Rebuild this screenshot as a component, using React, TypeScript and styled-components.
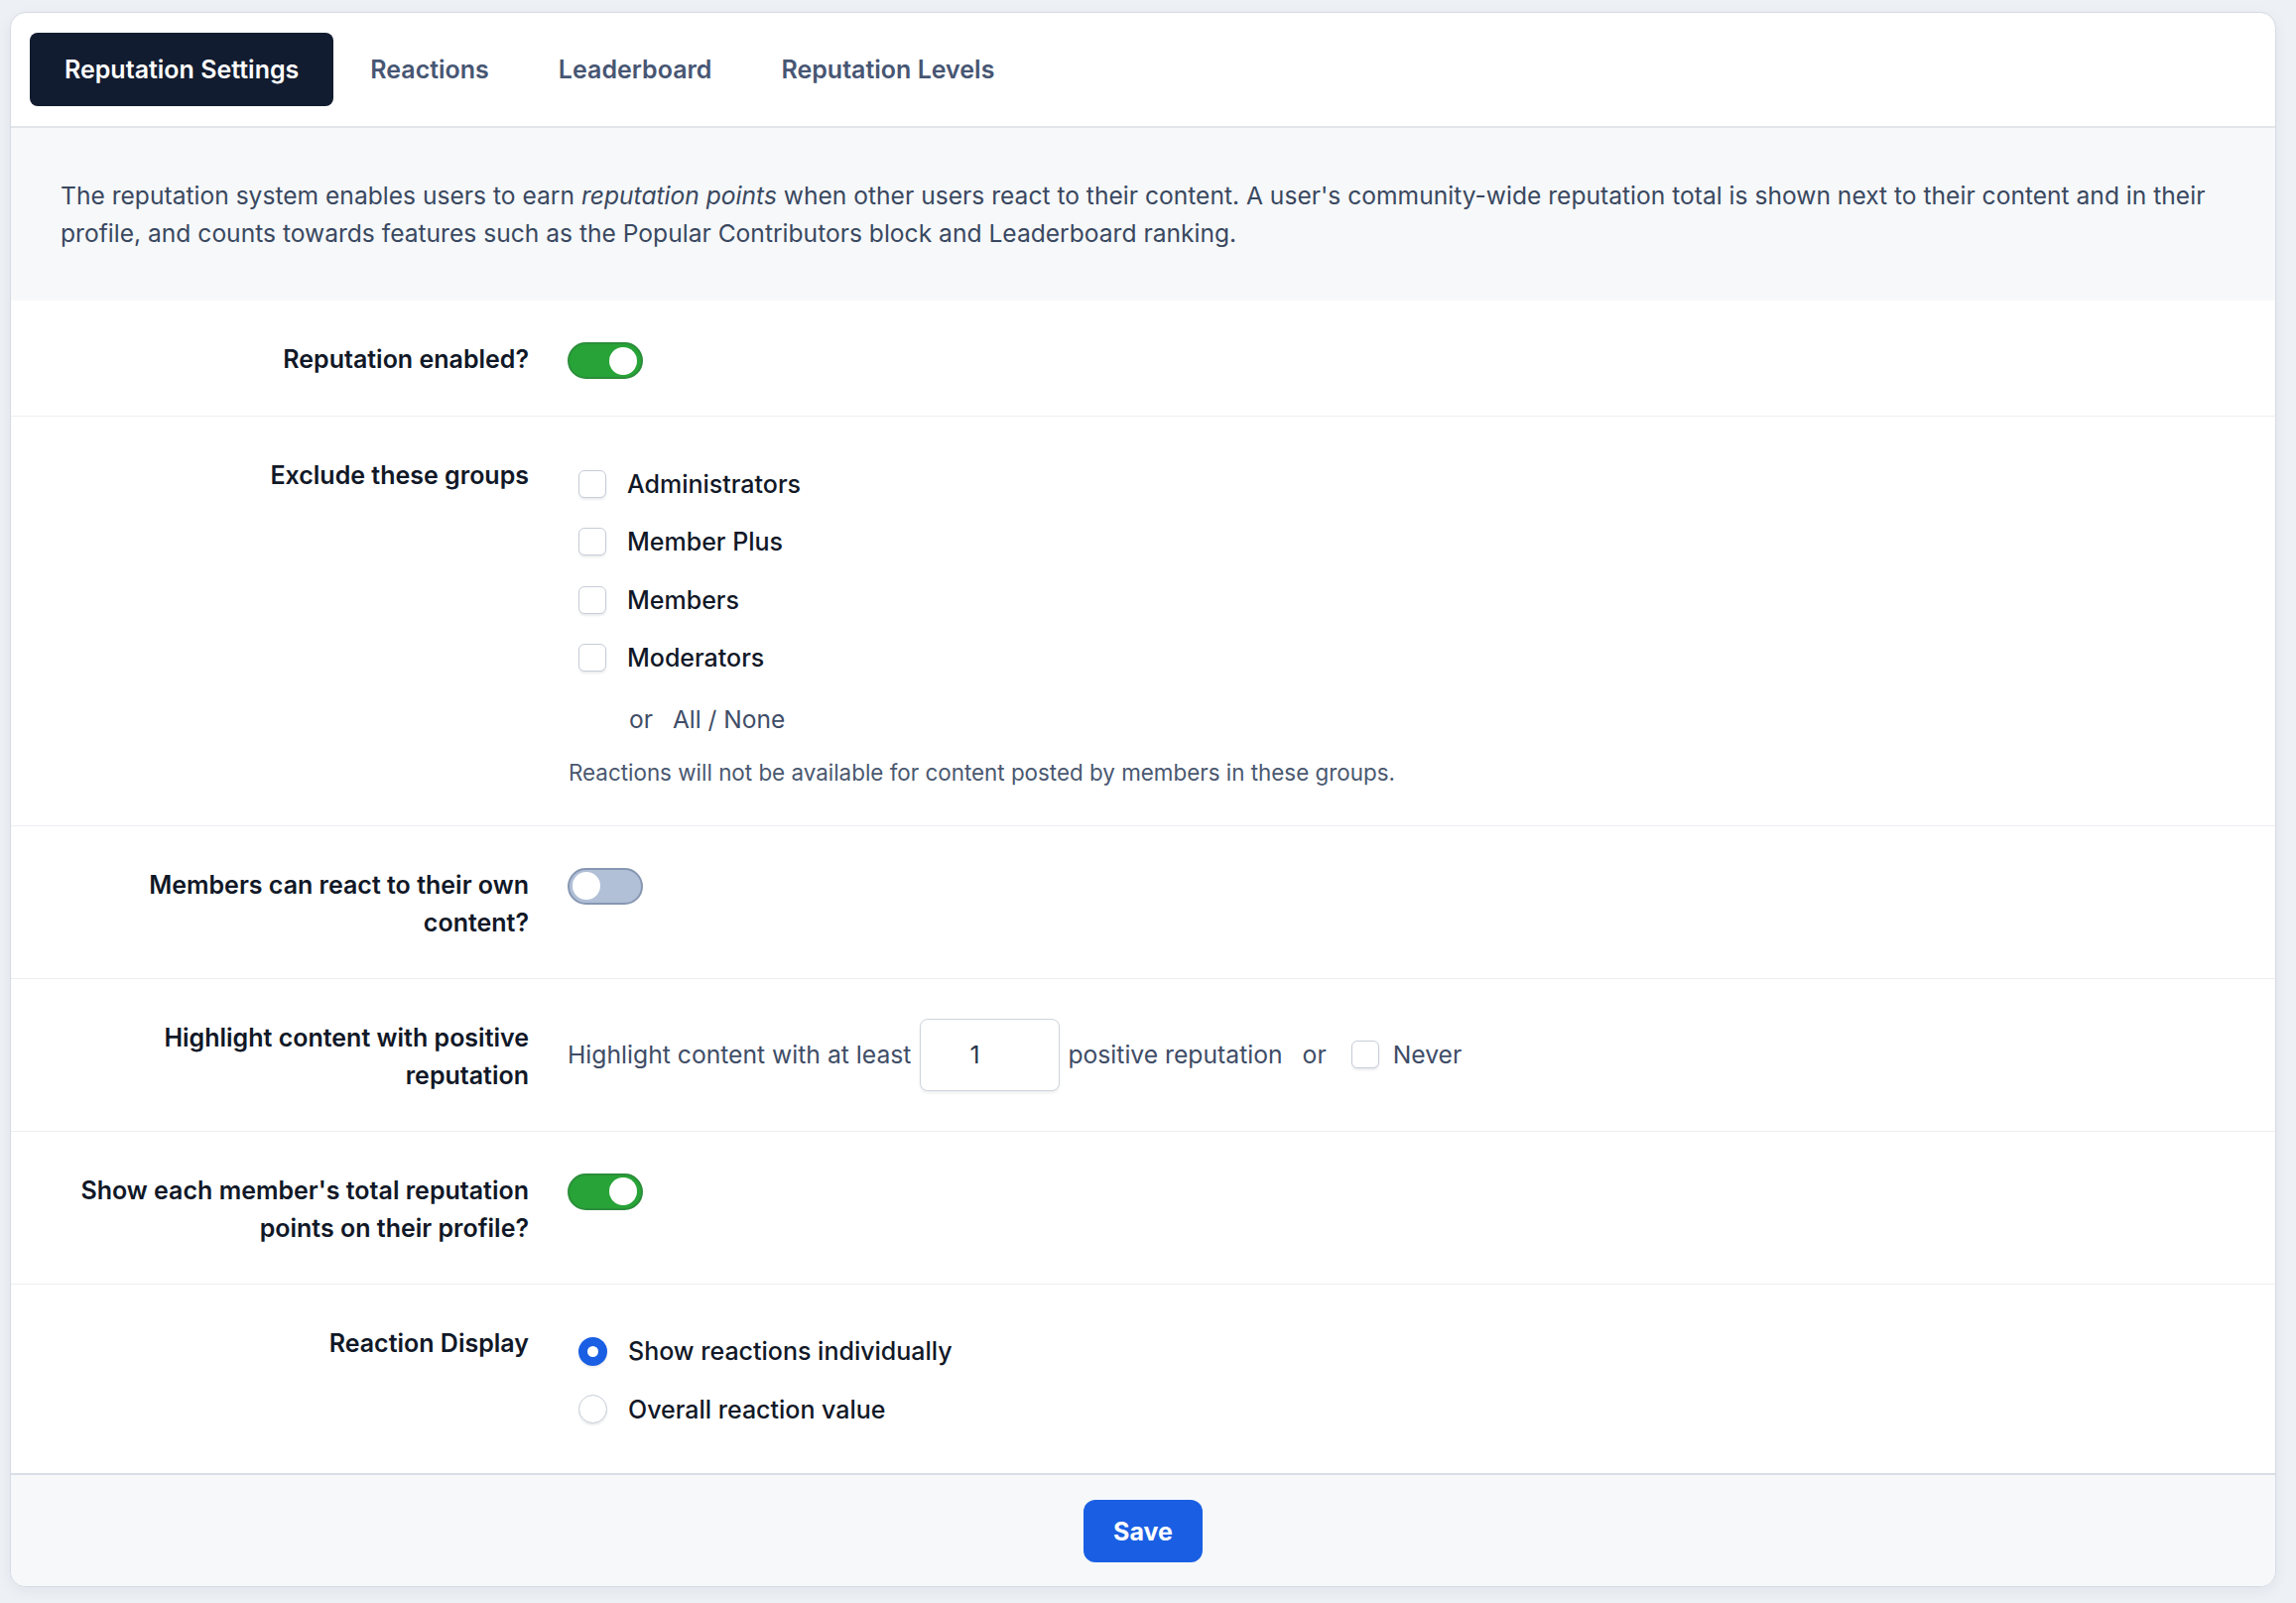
import React from "react";
import styled, { createGlobalStyle } from "styled-components";

const GlobalStyle = createGlobalStyle`
  html, body { margin: 0; padding: 0; }
  body {
    background: #edf0f5;
    font-family: Inter, "Noto Sans", "Liberation Sans", sans-serif;
    -webkit-font-smoothing: antialiased;
  }
  * { box-sizing: border-box; }
`;

const Page = styled.div`
  padding: 12px 20px 16px 10px;
`;

const Card = styled.div`
  background: #ffffff;
  border: 1px solid #d6dbe4;
  border-radius: 16px;
  overflow: hidden;
  box-shadow: 0 4px 14px rgba(30, 41, 59, 0.06);
`;

const TabBar = styled.nav`
  display: flex;
  align-items: center;
  gap: 4px;
  padding: 20px 20px 20px 19px;
  border-bottom: 2px solid #e2e5ea;
`;

const Tab = styled.button<{ $active?: boolean }>`
  height: 74px;
  padding: 0 ${(p) => (p.$active ? "35px" : "33px")};
  border: none;
  border-radius: 8px;
  font-family: inherit;
  font-size: 25px;
  font-weight: 600;
  cursor: pointer;
  background: ${(p) => (p.$active ? "#121c30" : "transparent")};
  color: ${(p) => (p.$active ? "#ffffff" : "#475673")};
`;

const Intro = styled.div`
  background: #f6f8fa;
  padding: 49px 50px 49px 50px;
  font-size: 24.6px;
  line-height: 38px;
  color: #3a4860;
  em { font-style: italic; }
`;

const Row = styled.div<{ $last?: boolean }>`
  display: grid;
  grid-template-columns: 522px 1fr;
  column-gap: 39px;
  padding: 40px 40px ${(p) => (p.$last ? "35px" : "37px")} 0;
  border-bottom: ${(p) => (p.$last ? "none" : "1px solid #eceef2")};
`;

const Label = styled.div`
  padding-left: 52px;
  text-align: right;
  font-size: 25px;
  font-weight: 600;
  line-height: 38px;
  color: #111827;
`;

const Control = styled.div`
  display: flex;
  flex-direction: column;
  align-items: flex-start;
`;

const Toggle = styled.span<{ $on?: boolean }>`
  position: relative;
  display: inline-block;
  width: 76px;
  height: 37px;
  margin-top: 2px;
  border-radius: 19px;
  background: ${(p) => (p.$on ? "#27a337" : "#b1bfd7")};
  border: 2px solid ${(p) => (p.$on ? "#2b8e3a" : "#8797b2")};
  &::after {
    content: "";
    position: absolute;
    top: 2.5px;
    left: ${(p) => (p.$on ? "40px" : "3px")};
    width: 28px;
    height: 28px;
    border-radius: 50%;
    background: #ffffff;
  }
`;

const OptionList = styled.div`
  display: flex;
  flex-direction: column;
  margin-top: -1.5px;
`;

const Option = styled.label`
  display: flex;
  align-items: center;
  gap: 21px;
  height: 58.5px;
  padding-left: 11px;
  font-size: 25px;
  font-weight: 500;
  color: #111827;
`;

const Box = styled.span`
  display: inline-block;
  width: 28px;
  height: 28px;
  flex: none;
  border: 1.5px solid #c6ccd7;
  border-radius: 6px;
  background: #ffffff;
  box-shadow: 0 2px 2px rgba(15, 23, 42, 0.08);
`;

const Radio = styled.span<{ $checked?: boolean }>`
  position: relative;
  display: inline-block;
  width: 29px;
  height: 29px;
  flex: none;
  border-radius: 50%;
  background: ${(p) => (p.$checked ? "#1a5fe3" : "#ffffff")};
  border: ${(p) => (p.$checked ? "none" : "1.5px solid #c6ccd7")};
  box-shadow: 0 2px 2px rgba(15, 23, 42, 0.08);
  &::after {
    content: "";
    display: ${(p) => (p.$checked ? "block" : "none")};
    position: absolute;
    top: 50%;
    left: 50%;
    width: 11px;
    height: 11px;
    margin: -5.5px 0 0 -5.5px;
    border-radius: 50%;
    background: #ffffff;
  }
`;

const AllNone = styled.div`
  display: flex;
  gap: 20px;
  margin: 13px 0 0 62px;
  font-size: 24.5px;
  line-height: 38px;
  color: #3f4d67;
`;

const Help = styled.p`
  margin: 19px 0 0 1px;
  font-size: 22.4px;
  line-height: 32px;
  color: #4a5870;
`;

const Inline = styled.div`
  display: flex;
  align-items: center;
  font-size: 24.7px;
  color: #3f4d67;
  white-space: nowrap;
`;

const NumberInput = styled.input`
  width: 141px;
  height: 73px;
  margin: 0 8px 0 9px;
  padding: 0 0 0 49px;
  border: 1.5px solid #cfd4dc;
  border-radius: 8px;
  box-shadow: 0 2px 3px rgba(15, 23, 42, 0.07);
  font-family: inherit;
  font-size: 24.7px;
  color: #253349;
  background: #ffffff;
`;

const Or = styled.span`
  margin: 0 25px 0 20px;
`;

const NeverBox = styled(Box)`
  margin-right: 14px;
`;

const Footer = styled.div`
  display: flex;
  justify-content: center;
  padding: 25px 0 24px;
  background: #f6f8fa;
  border-top: 2px solid #d9dee7;
`;

const SaveButton = styled.button`
  width: 120px;
  height: 63px;
  border: none;
  border-radius: 12px;
  background: #1a5fe3;
  color: #ffffff;
  font-family: inherit;
  font-size: 25px;
  font-weight: 700;
  cursor: pointer;
`;

const groups = ["Administrators", "Member Plus", "Members", "Moderators"];

export default function App() {
  return (
    <>
      <GlobalStyle />
      <Page>
        <Card>
          <TabBar>
            <Tab $active>Reputation Settings</Tab>
            <Tab>Reactions</Tab>
            <Tab>Leaderboard</Tab>
            <Tab>Reputation Levels</Tab>
          </TabBar>
          <Intro>
            The reputation system enables users to earn <em>reputation points</em> when other users
            react to their content. A user's community-wide reputation total is shown next to their
            content and in their profile, and counts towards features such as the Popular Contributors
            block and Leaderboard ranking.
          </Intro>

          <Row>
            <Label>Reputation enabled?</Label>
            <Control>
              <Toggle $on />
            </Control>
          </Row>

          <Row>
            <Label>Exclude these groups</Label>
            <Control>
              <OptionList>
                {groups.map((g) => (
                  <Option key={g}>
                    <Box />
                    {g}
                  </Option>
                ))}
              </OptionList>
              <AllNone>
                <span>or</span>
                <span>All / None</span>
              </AllNone>
              <Help>Reactions will not be available for content posted by members in these groups.</Help>
            </Control>
          </Row>

          <Row>
            <Label>Members can react to their own content?</Label>
            <Control>
              <Toggle />
            </Control>
          </Row>

          <Row>
            <Label>Highlight content with positive reputation</Label>
            <Control>
              <Inline>
                Highlight content with at least
                <NumberInput type="text" defaultValue="1" />
                positive reputation
                <Or>or</Or>
                <NeverBox />
                Never
              </Inline>
            </Control>
          </Row>

          <Row>
            <Label>Show each member's total reputation points on their profile?</Label>
            <Control>
              <Toggle $on />
            </Control>
          </Row>

          <Row $last>
            <Label>Reaction Display</Label>
            <Control>
              <OptionList>
                <Option>
                  <Radio $checked />
                  Show reactions individually
                </Option>
                <Option>
                  <Radio />
                  Overall reaction value
                </Option>
              </OptionList>
            </Control>
          </Row>

          <Footer>
            <SaveButton>Save</SaveButton>
          </Footer>
        </Card>
      </Page>
    </>
  );
}
